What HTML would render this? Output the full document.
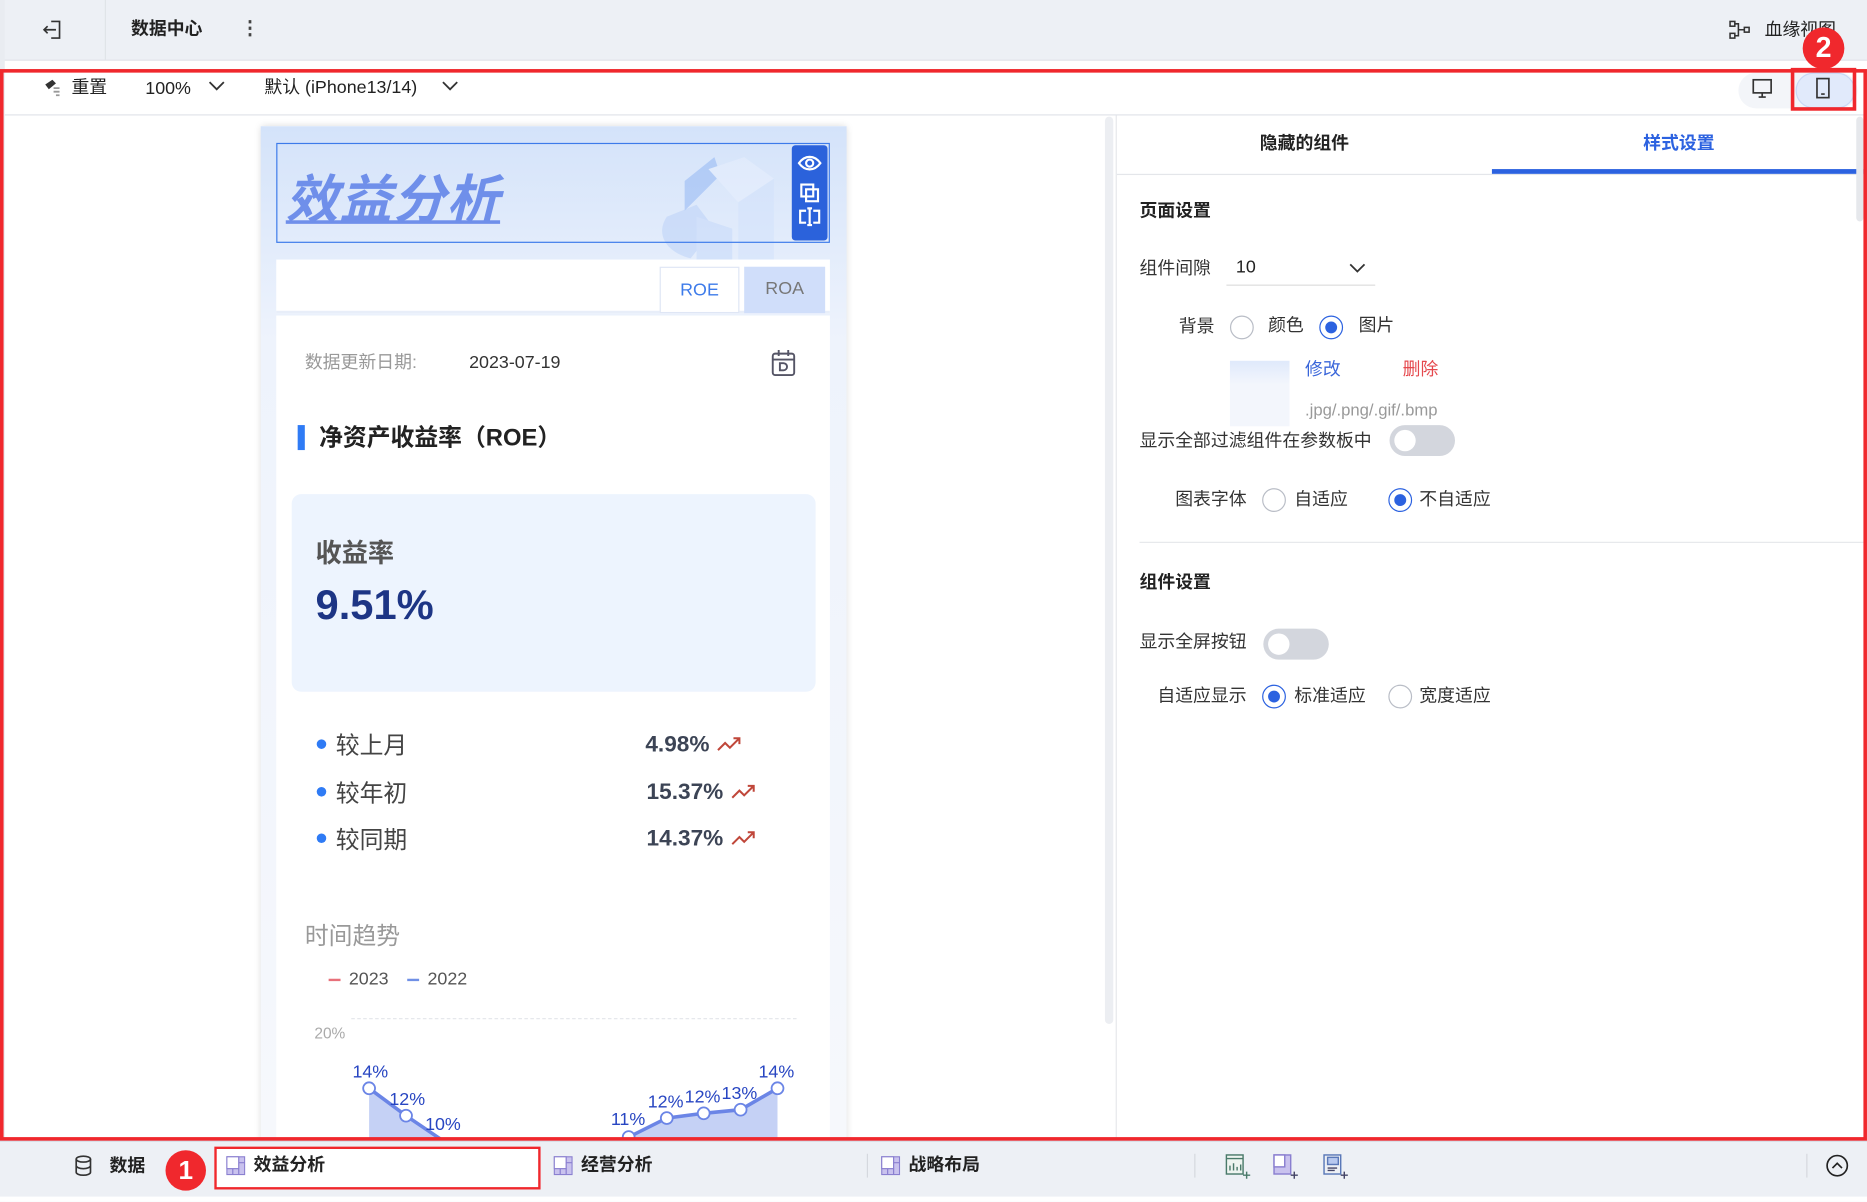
<!DOCTYPE html>
<html><head><meta charset="utf-8"><style>
*{box-sizing:border-box;margin:0;padding:0}
html,body{width:1867px;height:1202px;overflow:hidden;background:#fff}
body{font-family:"Liberation Sans","Noto Sans CJK SC",sans-serif;color:#222}
#w{position:absolute;left:0;top:0;width:1568px;height:1009px;transform:scale(1.19068);transform-origin:0 0;background:#fff;overflow:hidden}
.a{position:absolute;white-space:nowrap}
.t{font-size:15px;line-height:1}
.b{font-weight:bold}
.radio{position:absolute;width:20px;height:20px;border:1px solid #b9bdc6;border-radius:50%;background:#fff}
.radio.on{border-color:#2c62e0}
.radio.on:after{content:"";position:absolute;left:4px;top:4px;width:10px;height:10px;border-radius:50%;background:#2c62e0}
.tog{position:absolute;width:55px;height:26px;border-radius:13px;background:#d3d6dd}
.tog:after{content:"";position:absolute;left:4px;top:4px;width:18px;height:18px;border-radius:50%;background:#fff}
</style></head><body><div id="w">
<div class="a" style="left:0;top:0;width:1568px;height:51px;background:#edf0f5;border-bottom:1px solid #e2e5ea"></div>
<div class="a" style="left:0;top:0;width:4px;height:1009px;background:#e9ecf1"></div>
<div class="a" style="left:88px;top:0;width:1px;height:50px;background:#e0e3e8"></div>
<svg class="a" style="left:34px;top:15px" width="20" height="20" viewBox="0 0 20 20" fill="none" stroke="#333" stroke-width="1.4"><path d="M9 3h7v14H9"/><path d="M13 10H3M6 7l-3 3 3 3"/></svg>
<div class="a t b" style="left:110px;top:17px;font-size:15px">数据中心</div>
<div class="a b" style="left:202px;top:14px;font-size:16px;color:#444">⋮</div>
<svg class="a" style="left:1452px;top:17px" width="20" height="16" viewBox="0 0 20 16" fill="none" stroke="#333" stroke-width="1.3"><rect x="1" y="1" width="4" height="4"/><rect x="1" y="11" width="4" height="4"/><rect x="13" y="6" width="4" height="4"/><path d="M5 3h3v10H5M8 8h5"/></svg>
<div class="a t" style="left:1482px;top:18px">血缘视图</div>
<div class="a" style="left:4px;top:96px;width:1562px;height:1px;background:#e0e3ea"></div>
<svg class="a" style="left:36px;top:65px" width="16" height="16" viewBox="0 0 16 16"><path d="M2 6l6-4 3 3-6 5z" fill="#333"/><path d="M9 9h5M9 12h5M11 15h3" stroke="#999" stroke-width="1.5"/></svg>
<div class="a t" style="left:60px;top:66px">重置</div>
<div class="a t" style="left:122px;top:67px">100%</div>
<svg class="a" style="left:175px;top:67px" width="14" height="10" viewBox="0 0 14 10" fill="none" stroke="#333" stroke-width="1.5"><path d="M1 2l6 6 6-6"/></svg>
<div class="a t" style="left:222px;top:66px">默认 (iPhone13/14)</div>
<svg class="a" style="left:371px;top:67px" width="14" height="10" viewBox="0 0 14 10" fill="none" stroke="#333" stroke-width="1.5"><path d="M1 2l6 6 6-6"/></svg>
<div class="a" style="left:1460px;top:61px;width:100px;height:30px;border-radius:15px;background:#f3f5f9"></div>
<div class="a" style="left:1508px;top:61px;width:50px;height:30px;border-radius:15px;background:#e1eafb;border:1px solid #c9d8f6"></div>
<svg class="a" style="left:1471px;top:65px" width="18" height="18" viewBox="0 0 18 18" fill="none" stroke="#333" stroke-width="1.4"><rect x="1.5" y="2" width="15" height="11"/><path d="M9 13v3M6 16.5h6"/></svg>
<svg class="a" style="left:1524px;top:65px" width="14" height="18" viewBox="0 0 14 18" fill="none" stroke="#333" stroke-width="1.4"><rect x="2" y="1" width="10" height="16"/><path d="M5.5 14h3"/></svg>
<div class="a" style="left:928px;top:98px;width:7px;height:762px;border-radius:4px;background:#eceef2"></div>
<div class="a" style="left:219px;top:106px;width:492px;height:860px;background:linear-gradient(#d4e3fa,#eef3fc 180px,#f6f8fc);box-shadow:0 0 6px rgba(0,0,0,.15)"></div>
<svg class="a" style="left:545px;top:122px" width="125" height="96" viewBox="0 0 125 96" opacity=".5"><path d="M15 60c-10 15 0 30 20 35l20-25-15-20z" fill="#b9d0f8"/><path d="M30 30l25-20 5 15-30 30z" fill="#8db3f4"/><path d="M50 20l30-10 25 18-30 20z" fill="#e9f0fd"/><path d="M75 48l30-20v68H75z" fill="#d2e2fb"/><path d="M40 60l30 10v26H40z" fill="#c4d8fa"/></svg>
<div class="a" style="left:232px;top:120px;width:465px;height:84px;border:1px solid #3d7bea"></div>
<div class="a b" style="left:240px;top:132px;font-size:44px;font-style:italic;color:#6f8fea;text-decoration:underline;text-decoration-thickness:3px;letter-spacing:1px">效益分析</div>
<div class="a" style="left:665px;top:122px;width:30px;height:80px;border-radius:3px;background:#2b62db"></div>
<svg class="a" style="left:668px;top:127px" width="24" height="72" viewBox="0 0 24 72" fill="none" stroke="#fff" stroke-width="1.8"><path d="M3 10c5-7 13-7 18 0-5 7-13 7-18 0z"/><circle cx="12" cy="10" r="3"/><rect x="5" y="28" width="10" height="10"/><rect x="9" y="32" width="10" height="10"/><path d="M9 50H4v10h5M15 50h5v10h-5M12 48v14M10 48h4M10 62h4"/></svg>
<div class="a" style="left:232px;top:218px;width:465px;height:45px;background:#fff;border-bottom:2px solid #e8eef9"></div>
<div class="a" style="left:554px;top:224px;width:67px;height:39px;background:#fff;border:1px solid #dfe6f5;color:#3d7bea;font-size:15px;text-align:center;line-height:38px">ROE</div>
<div class="a" style="left:625px;top:224px;width:68px;height:39px;background:#d0defa;color:#777;font-size:15px;text-align:center;line-height:38px">ROA</div>
<div class="a" style="left:232px;top:265px;width:465px;height:700px;background:#fff"></div>
<div class="a t" style="left:256px;top:297px;color:#999">数据更新日期:</div>
<div class="a t" style="left:394px;top:297px;color:#333">2023-07-19</div>
<svg class="a" style="left:647px;top:293px" width="22" height="24" viewBox="0 0 22 24" fill="none" stroke="#556" stroke-width="1.6"><rect x="2" y="4" width="18" height="18" rx="2"/><path d="M2 9h18M7 1v5M15 1v5"/><path d="M8 12h3a3 3 0 010 6H8z"/></svg>
<div class="a" style="left:250px;top:357px;width:6px;height:21px;background:#2f7bf5"></div>
<div class="a b" style="left:268px;top:351px;font-size:20px;color:#222">净资产收益率（ROE）</div>
<div class="a" style="left:245px;top:415px;width:440px;height:166px;border-radius:8px;background:#edf4fe"></div>
<div class="a b" style="left:265px;top:447px;font-size:22px;color:#555">收益率</div>
<div class="a b" style="left:265px;top:489px;font-size:35px;color:#1d3585">9.51%</div>
<div class="a" style="left:266px;top:621px;width:8px;height:8px;border-radius:50%;background:#2f7bf5"></div>
<div class="a" style="left:266px;top:661px;width:8px;height:8px;border-radius:50%;background:#2f7bf5"></div>
<div class="a" style="left:266px;top:700px;width:8px;height:8px;border-radius:50%;background:#2f7bf5"></div>
<div class="a" style="left:282px;top:610px;font-size:20px;color:#444">较上月</div>
<div class="a" style="left:282px;top:650px;font-size:20px;color:#444">较年初</div>
<div class="a" style="left:282px;top:689px;font-size:20px;color:#444">较同期</div>
<div class="a b" style="left:542px;top:615px;font-size:19px;color:#3c4455">4.98%</div>
<div class="a b" style="left:543px;top:655px;font-size:19px;color:#3c4455">15.37%</div>
<div class="a b" style="left:543px;top:694px;font-size:19px;color:#3c4455">14.37%</div>
<svg class="a" style="left:602px;top:617px" width="22" height="16" viewBox="0 0 22 16" fill="none" stroke="#c0473a" stroke-width="1.7"><path d="M1 13l6-6 4 4 8-8M14 3h5v5"/></svg>
<svg class="a" style="left:614px;top:657px" width="22" height="16" viewBox="0 0 22 16" fill="none" stroke="#c0473a" stroke-width="1.7"><path d="M1 13l6-6 4 4 8-8M14 3h5v5"/></svg>
<svg class="a" style="left:614px;top:696px" width="22" height="16" viewBox="0 0 22 16" fill="none" stroke="#c0473a" stroke-width="1.7"><path d="M1 13l6-6 4 4 8-8M14 3h5v5"/></svg>
<div class="a" style="left:256px;top:770px;font-size:20px;color:#999">时间趋势</div>
<div class="a" style="left:276px;top:822px;width:10px;height:2px;background:#e8707a"></div>
<div class="a t" style="left:293px;top:815px;color:#555">2023</div>
<div class="a" style="left:342px;top:822px;width:10px;height:2px;background:#7090e6"></div>
<div class="a t" style="left:359px;top:815px;color:#555">2022</div>
<div class="a" style="left:295px;top:855px;width:374px;border-top:1px dashed #e6e8ec"></div>
<div class="a" style="left:264px;top:860px;font-size:13px;color:#aaa">20%</div>
<svg class="a" style="left:232px;top:880px" width="465" height="78" viewBox="232 880 465 78">
<path d="M310 914L341 937L372 958L310 958Z" fill="#c5d1f5"/>
<path d="M528 955L560 939L591 935L622 932L653 914L653 958L528 958Z" fill="#c5d1f5"/>
<path d="M310 914L341 937L372 958" fill="none" stroke="#6b85e6" stroke-width="3"/>
<path d="M528 955L560 939L591 935L622 932L653 914" fill="none" stroke="#6b85e6" stroke-width="3"/>
<g fill="#fff" stroke="#6b85e6" stroke-width="1.5"><circle cx="310" cy="914" r="5"/><circle cx="341" cy="937" r="5"/><circle cx="528" cy="955" r="5"/><circle cx="560" cy="939" r="5"/><circle cx="591" cy="935" r="5"/><circle cx="622" cy="932" r="5"/><circle cx="653" cy="914" r="5"/></g>
<g fill="#2846c2" font-size="15" font-family="Liberation Sans,sans-serif"><text x="296" y="905">14%</text><text x="327" y="928">12%</text><text x="357" y="949">10%</text><text x="513" y="945">11%</text><text x="544" y="930">12%</text><text x="575" y="926">12%</text><text x="606" y="923">13%</text><text x="637" y="905">14%</text></g>
</svg>
<div class="a" style="left:937px;top:97px;width:1px;height:860px;background:#e6e8ec"></div>
<div class="a" style="left:938px;top:146px;width:628px;height:1px;background:#e4e6ea"></div>
<div class="a" style="left:1253px;top:142px;width:313px;height:4px;background:#2c62e0"></div>
<div class="a" style="left:1559px;top:98px;width:6px;height:88px;border-radius:3px;background:#e6e8ec"></div>
<div class="a t b" style="left:1058px;top:113px">隐藏的组件</div>
<div class="a t b" style="left:1380px;top:113px;color:#2c62e0">样式设置</div>
<div class="a t b" style="left:957px;top:170px">页面设置</div>
<div class="a t" style="left:957px;top:218px;color:#333">组件间隙</div>
<div class="a t" style="left:1038px;top:217px">10</div>
<svg class="a" style="left:1133px;top:220px" width="14" height="10" viewBox="0 0 14 10" fill="none" stroke="#333" stroke-width="1.5"><path d="M1 2l6 6 6-6"/></svg>
<div class="a" style="left:1030px;top:239px;width:125px;height:1px;background:#ddd"></div>
<div class="a t" style="left:990px;top:267px;color:#333">背景</div>
<div class="radio" style="left:1033px;top:265px"></div>
<div class="a t" style="left:1065px;top:266px;color:#333">颜色</div>
<div class="radio on" style="left:1108px;top:265px"></div>
<div class="a t" style="left:1141px;top:266px;color:#333">图片</div>
<div class="a" style="left:1033px;top:303px;width:50px;height:55px;background:linear-gradient(#dfe9fb,#f3f6fc 20px)"></div>
<div class="a t" style="left:1096px;top:303px;color:#3a66d9">修改</div>
<div class="a t" style="left:1178px;top:303px;color:#e5484d">删除</div>
<div class="a" style="left:1096px;top:336px;font-size:14px;color:#999">.jpg/.png/.gif/.bmp</div>
<div class="a t" style="left:957px;top:363px;color:#333">显示全部过滤组件在参数板中</div>
<div class="tog" style="left:1167px;top:357px"></div>
<div class="a t" style="left:987px;top:412px;color:#333">图表字体</div>
<div class="radio" style="left:1060px;top:410px"></div>
<div class="a t" style="left:1087px;top:412px;color:#333">自适应</div>
<div class="radio on" style="left:1166px;top:410px"></div>
<div class="a t" style="left:1192px;top:412px;color:#333">不自适应</div>
<div class="a" style="left:957px;top:455px;width:609px;height:1px;background:#e6e8ec"></div>
<div class="a t b" style="left:957px;top:482px">组件设置</div>
<div class="a t" style="left:957px;top:532px;color:#333">显示全屏按钮</div>
<div class="tog" style="left:1061px;top:528px"></div>
<div class="a t" style="left:972px;top:577px;color:#333">自适应显示</div>
<div class="radio on" style="left:1060px;top:575px"></div>
<div class="a t" style="left:1087px;top:577px;color:#333">标准适应</div>
<div class="radio" style="left:1166px;top:575px"></div>
<div class="a t" style="left:1192px;top:577px;color:#333">宽度适应</div>
<div class="a" style="left:0;top:957px;width:1568px;height:52px;background:#edf0f5;border-top:2px solid #d8dde6"></div>
<div class="a" style="left:0;top:1005px;width:1568px;height:4px;background:#fff"></div>
<svg class="a" style="left:62px;top:970px" width="16" height="18" viewBox="0 0 16 18" fill="none" stroke="#333" stroke-width="1.4"><ellipse cx="8" cy="3.5" rx="6" ry="2.5"/><path d="M2 3.5v11c0 1.4 2.7 2.5 6 2.5s6-1.1 6-2.5v-11M2 9c0 1.4 2.7 2.5 6 2.5s6-1.1 6-2.5"/></svg>
<div class="a t b" style="left:92px;top:972px">数据</div>
<div class="a" style="left:180px;top:963px;width:274px;height:36px;background:#fff;border:2px solid #f0282d"></div>
<svg class="a" style="left:190px;top:971px" width="16" height="16" viewBox="0 0 16 16" fill="#c9c2ee" stroke="#8a7fd0" stroke-width="1"><rect x=".5" y=".5" width="15" height="15"/><rect x=".5" y=".5" width="10" height="10" fill="#fff"/><path d="M10.5 5.5h5M5.5 10.5v5M10.5 10.5v5" fill="none"/></svg>
<div class="a t b" style="left:213px;top:971px">效益分析</div>
<svg class="a" style="left:465px;top:971px" width="16" height="16" viewBox="0 0 16 16" fill="#c9c2ee" stroke="#8a7fd0" stroke-width="1"><rect x=".5" y=".5" width="15" height="15"/><rect x=".5" y=".5" width="10" height="10" fill="#fff"/><path d="M10.5 5.5h5M5.5 10.5v5M10.5 10.5v5" fill="none"/></svg>
<div class="a t b" style="left:488px;top:971px">经营分析</div>
<div class="a" style="left:728px;top:969px;width:1px;height:20px;background:#d5d8de"></div>
<svg class="a" style="left:740px;top:971px" width="16" height="16" viewBox="0 0 16 16" fill="#c9c2ee" stroke="#8a7fd0" stroke-width="1"><rect x=".5" y=".5" width="15" height="15"/><rect x=".5" y=".5" width="10" height="10" fill="#fff"/><path d="M10.5 5.5h5M5.5 10.5v5M10.5 10.5v5" fill="none"/></svg>
<div class="a t b" style="left:763px;top:971px">战略布局</div>
<div class="a" style="left:1003px;top:969px;width:1px;height:20px;background:#d5d8de"></div>
<svg class="a" style="left:1029px;top:969px" width="22" height="22" viewBox="0 0 22 22" fill="none" stroke="#4a7a6a" stroke-width="1.2"><rect x="1" y="1" width="14" height="16" fill="#eef4f0"/><path d="M1 4h14M4 14v-4M7 14v-6M10 14v-3M13 14v-5M15 18h6M18 15v6"/></svg>
<svg class="a" style="left:1069px;top:969px" width="22" height="22" viewBox="0 0 22 22" fill="#c9c2ee" stroke="#8a7fd0" stroke-width="1.2"><rect x="1" y="1" width="14" height="16"/><rect x="1" y="1" width="9" height="10" fill="#fff"/><path d="M15 18h6M18 15v6" stroke="#446"/></svg>
<svg class="a" style="left:1111px;top:969px" width="22" height="22" viewBox="0 0 22 22" fill="none" stroke="#5a78b8" stroke-width="1.2"><rect x="1" y="1" width="14" height="16"/><rect x="4" y="3" width="9" height="6" fill="#b7c8ef"/><path d="M4 12h8M4 14h6M15 18h6M18 15v6" stroke="#446"/></svg>
<div class="a" style="left:1517px;top:969px;width:1px;height:20px;background:#d5d8de"></div>
<svg class="a" style="left:1533px;top:969px" width="20" height="20" viewBox="0 0 20 20" fill="none" stroke="#222" stroke-width="1.4"><circle cx="10" cy="10" r="8.5"/><path d="M6 12l4-4 4 4"/></svg>
<div class="a" style="left:0;top:58px;width:1568px;height:900px;border:3px solid #f0282d"></div>
<div class="a" style="left:1504px;top:57px;width:55px;height:36px;border:3px solid #f0282d"></div>
<div class="a" style="left:1514px;top:23px;width:35px;height:35px;border-radius:50%;background:#f0282d;color:#fff;font-size:24px;font-weight:bold;text-align:center;line-height:35px">2</div>
<div class="a" style="left:139px;top:966px;width:34px;height:34px;border-radius:50%;background:#f0282d;color:#fff;font-size:22px;font-weight:bold;text-align:center;line-height:34px">1</div>
</div></body></html>
